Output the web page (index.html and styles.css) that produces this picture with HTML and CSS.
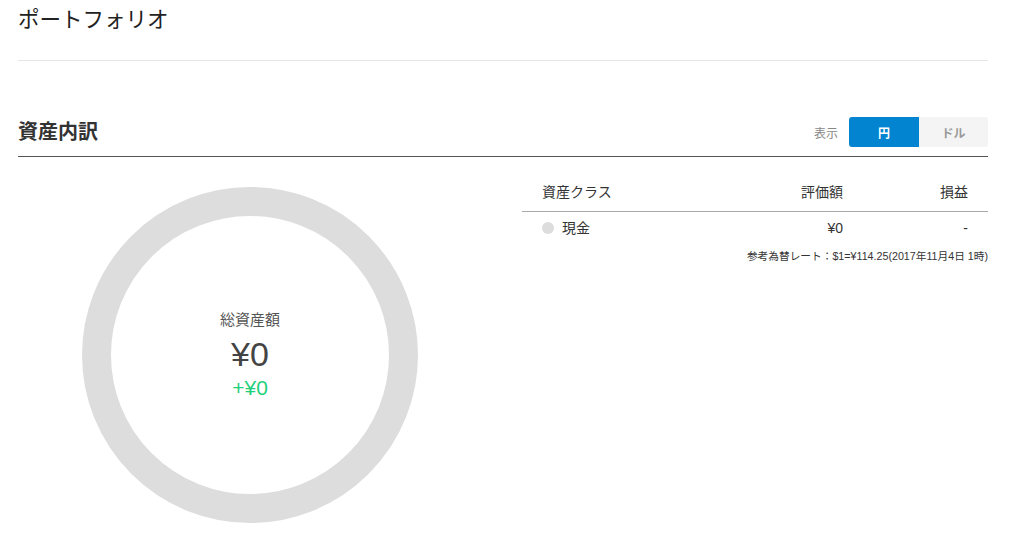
FILE: index.html
```html
<!DOCTYPE html>
<html lang="ja">
<head>
  <meta charset="UTF-8" />
  <meta name="viewport" content="width=device-width, initial-scale=1.0"/>
  <title>ポートフォリオ</title>
  <link rel="stylesheet" href="styles.css">
</head>
<body>
  <div class="container">
    <h1>ポートフォリオ</h1>

    <div class="section-head">
      <h2>資産内訳</h2>
      <div class="toggle">
        <span class="toggle-label">表示</span>
        <button class="active">円</button>
        <button>ドル</button>
      </div>
    </div>

    <div class="breakdown">
      <div class="chart">
        <div class="ring">
          <div class="ring-label">総資産額</div>
          <div class="ring-total">¥0</div>
          <div class="ring-gain">+¥0</div>
        </div>
      </div>

      <div class="assets">
        <div class="row head">
          <span>資産クラス</span>
          <span class="num">評価額</span>
          <span class="num">損益</span>
        </div>
        <div class="row">
          <span class="asset"><i class="dot"></i>現金</span>
          <span class="num">¥0</span>
          <span class="num">-</span>
        </div>
        <div class="rate">参考為替レート：$1=¥114.25(2017年11月4日 1時)</div>
      </div>
    </div>
  </div>
</body>
</html>
```

FILE: styles.css
```css
body {
  font-family: "Liberation Sans", "Noto Sans CJK JP", sans-serif;
  margin: 0;
  padding: 0;
  background: #fff;
  color: #333;
}
.container {
  width: 970px;
  margin-left: 18px;
}
h1 {
  margin: 0;
  padding: 6px 0 26px;
  font-size: 21.5px;
  line-height: 28px;
  font-weight: normal;
  color: #222;
  border-bottom: 1px solid #e6e6e6;
}
.section-head {
  display: flex;
  align-items: center;
  justify-content: space-between;
  margin-top: 56px;
  padding-bottom: 9px;
  border-bottom: 1px solid #555;
}
h2 {
  margin: 0;
  font-size: 20px;
  line-height: 28px;
  font-weight: bold;
  color: #333;
}
.toggle { display: flex; align-items: center; }
.toggle-label {
  font-size: 12px;
  color: #888;
  margin-right: 11px;
}
.toggle button {
  width: 69px;
  height: 30px;
  border: none;
  background: #f4f4f4;
  color: #999;
  font-family: inherit;
  font-size: 12px;
  font-weight: bold;
  border-radius: 0 3px 3px 0;
  padding: 0;
}
.toggle button.active {
  width: 70px;
  background: #0284d0;
  color: #fff;
  border-radius: 3px 0 0 3px;
}
.breakdown {
  display: flex;
  gap: 40px;
}
.chart {
  width: 464px;
  display: flex;
  justify-content: center;
  padding-top: 30px;
}
.ring {
  width: 336px;
  height: 336px;
  box-sizing: border-box;
  border: 29px solid #dddddd;
  border-radius: 50%;
  display: flex;
  flex-direction: column;
  align-items: center;
  justify-content: center;
}
.ring-label { font-size: 15px; color: #555; line-height: 20px; }
.ring-total { font-size: 34px; color: #444; line-height: 40px; margin-top: 4px; }
.ring-gain { font-size: 21px; color: #1fd07a; line-height: 26px; margin-top: 1px; }
.assets { width: 466px; }
.row {
  display: grid;
  grid-template-columns: 1fr 100px 125px;
  font-size: 14px;
  line-height: 20px;
  padding: 6px 0 0;
}
.row.head {
  padding: 25px 0 9px;
  border-bottom: 1px solid #aaa;
}
.row > span:first-child { padding-left: 20px; }
.num { text-align: right; padding-right: 20px; }
.asset { display: flex; align-items: center; }
.dot {
  width: 12px;
  height: 12px;
  border-radius: 50%;
  background: #ddd;
  margin-right: 8px;
}
.rate {
  text-align: right;
  font-size: 10.7px;
  margin-top: 10px;
  color: #333;
}
```
